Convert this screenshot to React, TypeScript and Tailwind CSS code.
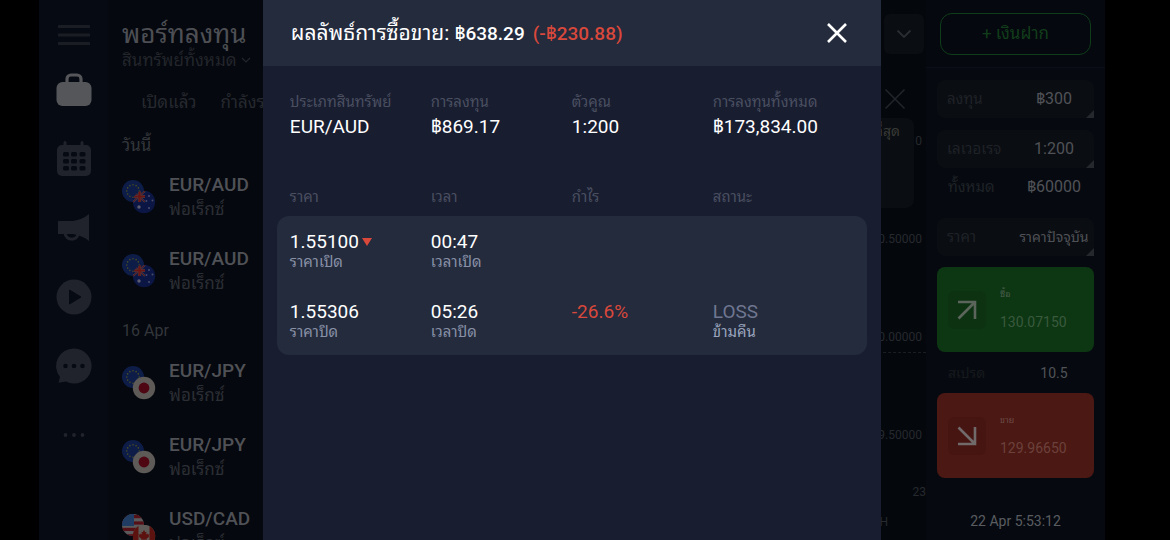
import type { ReactNode } from "react";

type FlagCode = "AU" | "JP" | "CA";

function EuFlag() {
  const stars = Array.from({ length: 12 }, (_, i) => {
    const a = (i * Math.PI) / 6;
    return <circle key={i} cx={11 + 6.2 * Math.sin(a)} cy={11 - 6.2 * Math.cos(a)} r="0.8" fill="#4c4e22" />;
  });
  return (
    <g>
      <circle cx="11" cy="11" r="11" fill="#0d1d48" />
      {stars}
    </g>
  );
}

function UsFlag() {
  return (
    <g clipPath="url(#back)">
      <rect width="22" height="22" fill="#5a5a5c" />
      {[1, 7.4, 13.8, 20.2].map((y) => (
        <rect key={y} y={y} width="22" height="3.2" fill="#551017" />
      ))}
      <rect width="12" height="12" fill="#203c62" />
    </g>
  );
}

function FrontFlag({ code }: { code: FlagCode }) {
  if (code === "JP")
    return (
      <g>
        <circle cx="22" cy="22" r="11.2" fill="#5d5a58" />
        <circle cx="22" cy="22" r="5.4" fill="#4e0612" />
      </g>
    );
  if (code === "CA")
    return (
      <g clipPath="url(#front)">
        <rect x="11" y="11" width="23" height="23" fill="#5d5a58" />
        <rect x="10" y="11" width="6.5" height="23" fill="#5c130f" />
        <rect x="27.5" y="11" width="7" height="23" fill="#5c130f" />
        <path
          d="M22 16l1.3 2.3 1.3-.6-.5 2.8 1.4-1 .4 1 1.6-.2-.9 2 .7.4-2.8 2.1.3 1-2.5-.3V28h-.6v-2.5l-2.5.3.3-1-2.8-2.1.7-.4-.9-2 1.6.2.4-1 1.4 1-.5-2.8 1.3.6z"
          fill="#5c130f"
        />
      </g>
    );
  return (
    <g clipPath="url(#front)">
      <rect x="11" y="11" width="23" height="23" fill="#0b1644" />
      <path d="M11 11l12 11M23 11L11 22" stroke="#3c3c4c" strokeWidth="2.2" />
      <path d="M11 11l12 11M23 11L11 22" stroke="#5e1018" strokeWidth="1" />
      <path d="M17.500 11v11M11 16.500h12" stroke="#45404c" strokeWidth="3.200" />
      <path d="M17.500 11v11M11 16.500h12" stroke="#6a1512" strokeWidth="2.200" />
      <circle cx="17" cy="27" r="1.700" fill="#5c5c70" />
      <circle cx="27" cy="16" r="1" fill="#4a4c6c" />
      <circle cx="24.500" cy="21" r="0.900" fill="#4a4c6c" />
      <circle cx="30.500" cy="20.500" r="1" fill="#4a4c6c" />
      <circle cx="27" cy="28" r="1" fill="#4a4c6c" />
    </g>
  );
}

function PairIcon({ back, front }: { back: "EU" | "US"; front: FlagCode }) {
  return (
    <svg viewBox="0 0 34 34" className="size-[34px] shrink-0" aria-hidden="true">
      <defs>
        <clipPath id="back">
          <circle cx="11" cy="11" r="11" />
        </clipPath>
        <clipPath id="front">
          <circle cx="22" cy="22" r="11.2" />
        </clipPath>
      </defs>
      {back === "EU" ? <EuFlag /> : <UsFlag />}
      <FrontFlag code={front} />
    </svg>
  );
}

function NavButton({ label, children }: { label: string; children: ReactNode }) {
  return (
    <button type="button" aria-label={label} className="flex h-[69px] w-full shrink-0 items-center justify-center">
      {children}
    </button>
  );
}

function Sidebar() {
  return (
    <nav className="flex w-[69px] shrink-0 flex-col bg-[#060a12]">
      <button type="button" aria-label="เมนู" className="flex h-[55px] shrink-0 items-center justify-center pt-[14px]">
        <svg viewBox="0 0 32 22" className="h-[22px] w-8">
          <path d="M1 2.500h30M1 11h30M1 19.500h30" stroke="#1a1d23" strokeWidth="3" strokeLinecap="round" />
        </svg>
      </button>
      <NavButton label="พอร์ทลงทุน">
        <svg viewBox="0 0 36 34" className="h-[34px] w-9">
          <path d="M11 10V6a4 4 0 0 1 4-4h6a4 4 0 0 1 4 4v4" fill="none" stroke="#55565a" strokeWidth="3.200" />
          <rect x="0.500" y="9" width="35" height="24" rx="6" fill="#55565a" />
        </svg>
      </NavButton>
      <NavButton label="ปฏิทิน">
        <svg viewBox="0 0 34 36" className="h-9 w-[34px]">
          <path d="M8 1.500v5M25 1.500v5" stroke="#20232c" strokeWidth="3" strokeLinecap="round" />
          <rect y="4" width="34" height="31" rx="5" fill="#20232c" />
          {[11, 18, 25].map((y) =>
            [6, 14, 22.5].map((x) => (
              <rect key={`${x}-${y}`} x={x} y={y} width="6" height="4.500" rx="1.500" fill="#060a12" />
            )),
          )}
        </svg>
      </NavButton>
      <NavButton label="ข่าวสาร">
        <svg viewBox="0 0 34 28" className="h-7 w-[34px]">
          <path d="M1 7h15c6-1 11-3 16-7v27c-5-4-10-6-16-7H1z" fill="#20232c" />
          <path d="M8 19c1 8 12 8 13 1" fill="none" stroke="#20232c" strokeWidth="3" />
        </svg>
      </NavButton>
      <NavButton label="วิดีโอ">
        <svg viewBox="0 0 36 36" className="size-9">
          <circle cx="18" cy="18" r="17.500" fill="#20232c" />
          <path d="M13.500 11v14l11.500-7z" fill="#060a12" stroke="#060a12" strokeLinejoin="round" />
        </svg>
      </NavButton>
      <NavButton label="แชท">
        <svg viewBox="0 0 36 36" className="size-9">
          <path d="M18 .5a17.500 17.500 0 1 1-8 33L2.500 34.800 4 29A17.500 17.500 0 0 1 18 .5z" fill="#20232c" />
          <circle cx="9.500" cy="18" r="2.300" fill="#060a12" />
          <circle cx="18" cy="18" r="2.300" fill="#060a12" />
          <circle cx="26.500" cy="18" r="2.300" fill="#060a12" />
        </svg>
      </NavButton>
      <NavButton label="เพิ่มเติม">
        <svg viewBox="0 0 22 4" className="h-1 w-[22px]">
          <circle cx="2.500" cy="2" r="1.900" fill="#20232c" />
          <circle cx="11" cy="2" r="1.900" fill="#20232c" />
          <circle cx="19.500" cy="2" r="1.900" fill="#20232c" />
        </svg>
      </NavButton>
    </nav>
  );
}

function Position({ pair, back, front }: { pair: string; back: "EU" | "US"; front: FlagCode }) {
  return (
    <li className="flex h-[74px] gap-[13px] pt-[9px]">
      <div className="pt-[7px]">
        <PairIcon back={back} front={front} />
      </div>
      <div>
        <div className="text-[19px] leading-6 font-medium text-[#4f5156]">{pair}</div>
        <div className="text-[17px] leading-6 text-[#2b2e34]">ฟอเร็กซ์</div>
      </div>
    </li>
  );
}

function Portfolio() {
  return (
    <section className="w-[222px] shrink-0 bg-[#05080e] pl-[14px]">
      <h1 className="pt-[18px] text-[26px] leading-8 text-[#4d4f54]">พอร์ทลงทุน</h1>
      <button type="button" className="flex h-5 items-center gap-1 text-[17px] leading-5 text-[#22252b]">
        สินทรัพย์ทั้งหมด
        <svg viewBox="0 0 10 6" className="h-1.5 w-2.5">
          <path d="M1 1l4 4 4-4" fill="none" stroke="currentColor" strokeWidth="1.200" />
        </svg>
      </button>
      <div className="flex h-14 items-center gap-6 pt-[10px] pl-[19px] text-[17px] whitespace-nowrap text-[#26292f]">
        <button type="button">เปิดแล้ว</button>
        <button type="button">กำลังรอ</button>
      </div>
      <h2 className="h-[38px] text-[17px] leading-[38px] text-[#33363b]">วันนี้</h2>
      <ul>
        <Position pair="EUR/AUD" back="EU" front="AU" />
        <Position pair="EUR/AUD" back="EU" front="AU" />
      </ul>
      <h2 className="h-[38px] text-base leading-[38px] text-[#33363b]">16 Apr</h2>
      <ul>
        <Position pair="EUR/JPY" back="EU" front="JP" />
        <Position pair="EUR/JPY" back="EU" front="JP" />
        <Position pair="USD/CAD" back="US" front="CA" />
      </ul>
    </section>
  );
}

function Chart() {
  return (
    <section className="flex min-w-0 flex-1 flex-col bg-[#04070c]">
      <div className="flex h-[68px] shrink-0 items-center justify-end pr-[2px]">
        <button
          type="button"
          aria-label="เลือกสินทรัพย์"
          className="flex size-10 items-center justify-center rounded-md bg-[#0a0d12]"
        >
          <svg viewBox="0 0 16 10" className="h-2.5 w-4">
            <path d="M1.500 1.500L8 8l6.500-6.500" fill="none" stroke="#2a2d32" strokeWidth="1.800" />
          </svg>
        </button>
      </div>
      <div className="relative flex flex-col pt-6 text-right text-xs text-[#26292e]">
        {["0", "0.50000", "0.00000", "9.50000"].map((p) => (
          <div key={p} className="h-[98px] pr-1 leading-[98px]">
            {p}
          </div>
        ))}
        <div className="absolute top-[284px] right-0 w-full border-t border-dashed border-[#1a1d22]" />
        <div className="absolute top-[50px] right-3 h-[90px] w-40 rounded-lg bg-[#0a0d11] pt-[3px] pr-[14px] text-sm leading-5 text-[#383a36]">
          ที่สุด
        </div>
        <button type="button" aria-label="ปิดกราฟ" className="absolute top-5 right-5">
          <svg viewBox="0 0 22 22" className="size-[22px]">
            <path d="M1.500 1.500l19 19M20.500 1.500l-19 19" stroke="#22252b" strokeWidth="1.500" />
          </svg>
        </button>
      </div>
      <div className="h-4 text-right text-xs leading-4 text-[#26292e]">23</div>
      <div className="pt-[14px] pr-[38px] text-right text-xs leading-4 text-[#26292e]">H</div>
    </section>
  );
}

function Field({ label, value, small }: { label: string; value: string; small?: boolean }) {
  return (
    <button
      type="button"
      className="relative flex h-[38px] w-full shrink-0 items-center justify-between rounded-lg bg-[#0a0d12] pl-[10px]"
    >
      <span className="text-[15px] text-[#1f2227]">{label}</span>
      <span
        className={
          small
            ? "w-20 text-center text-sm whitespace-nowrap text-[#505257]"
            : "w-20 text-center text-base text-[#505257]"
        }
      >
        {value}
      </span>
      <svg viewBox="0 0 8 8" className="absolute right-0 bottom-0 size-2">
        <path d="M8 0v8H0z" fill="#25282c" />
      </svg>
    </button>
  );
}

function InfoRow({ label, value, small }: { label: string; value: string; small?: boolean }) {
  return (
    <div className="flex items-center justify-between pl-[11px]">
      <span className={small ? "text-sm text-[#16191d]" : "text-[15px] text-[#1f2227]"}>{label}</span>
      <span className={small ? "w-20 text-center text-sm text-[#505257]" : "w-20 text-center text-base text-[#505257]"}>
        {value}
      </span>
    </div>
  );
}

function TradePanel() {
  return (
    <aside className="flex w-[179px] shrink-0 flex-col bg-[#060a10]">
      <div className="flex h-[68px] shrink-0 items-center border-b border-[#0b0e1a] bg-[#05080e] px-[14px]">
        <button
          type="button"
          className="h-[42px] w-full rounded-xl border border-[#0f3d1a] text-[17px] text-[#123d1b]"
        >
          + เงินฝาก
        </button>
      </div>
      <div className="flex flex-col px-[11px] pt-3">
        <Field label="ลงทุน" value="฿300" />
        <div className="pt-3">
          <Field label="เลเวอเรจ" value="1:200" />
        </div>
        <div className="grid h-[38px] items-center">
          <InfoRow label="ทั้งหมด" value="฿60000" />
        </div>
        <div className="pt-3">
          <Field label="ราคา" value="ราคาปัจจุบัน" small />
        </div>
        <button
          type="button"
          className="mt-[11px] flex h-[85px] items-center gap-[14px] rounded-lg bg-[#0d3613] pl-[11px] text-left"
        >
          <span className="flex size-[38px] items-center justify-center rounded-md bg-[#0c3212]">
            <svg viewBox="0 0 20 20" className="size-5">
              <path d="M1 2h17v17M18 2L1.500 18.500" fill="none" stroke="#5c655c" strokeWidth="2.600" />
            </svg>
          </span>
          <span className="flex flex-col gap-3">
            <span className="text-[9px] leading-3 text-[#4b5e4d]">ซื้อ</span>
            <span className="text-sm leading-5 text-[#395a3d]">130.07150</span>
          </span>
        </button>
        <div className="grid h-[41px] items-center">
          <InfoRow label="สเปรด" value="10.5" small />
        </div>
        <button
          type="button"
          className="flex h-[85px] items-center gap-[14px] rounded-lg bg-[#4b1813] pl-[11px] text-left"
        >
          <span className="flex size-[38px] items-center justify-center rounded-md bg-[#461512]">
            <svg viewBox="0 0 20 20" className="size-5">
              <path d="M1 18h17V1M18 18L1.500 1.500" fill="none" stroke="#706a6a" strokeWidth="2.600" />
            </svg>
          </span>
          <span className="flex flex-col gap-3">
            <span className="text-[9px] leading-3 text-[#6b4b48]">ขาย</span>
            <span className="text-sm leading-5 text-[#6b413c]">129.96650</span>
          </span>
        </button>
        <time className="pt-[33px] text-center text-sm leading-5 text-[#5a5c60]">22 Apr 5:53:12</time>
      </div>
    </aside>
  );
}

const summary = [
  ["ประเภทสินทรัพย์", "EUR/AUD"],
  ["การลงทุน", "฿869.17"],
  ["ตัวคูณ", "1:200"],
  ["การลงทุนทั้งหมด", "฿173,834.00"],
];

function ResultDialog() {
  return (
    <div role="dialog" aria-labelledby="result-title" className="flex w-[58%] flex-col bg-[#181d30]">
      <header className="flex h-[66px] shrink-0 items-center justify-between bg-[#232b3d] pr-[33px] pl-7">
        <h2 id="result-title" className="text-[21px] leading-6 whitespace-nowrap text-white">
          ผลลัพธ์การซื้อขาย: <span className="text-[19px] font-medium">฿638.29</span>
          <span className="pl-2 text-[19px] font-medium text-[#d9483b]">(-฿230.88)</span>
        </h2>
        <button type="button" aria-label="ปิด">
          <svg viewBox="0 0 22 22" className="size-[22px]">
            <path d="M2 2l18 18M20 2L2 20" stroke="#fff" strokeWidth="2.600" />
          </svg>
        </button>
      </header>
      <div className="px-[14px] pt-[26px]">
        <dl className="grid grid-cols-[141px_141px_141px_1fr] pl-[13px]">
          {summary.map(([label, value]) => (
            <div key={label}>
              <dt className="text-[15px] leading-5 text-[#4a4f60]">{label}</dt>
              <dd className="pt-[3px] text-[19px] leading-6 text-white">{value}</dd>
            </div>
          ))}
        </dl>
        <table className="mt-12 w-full table-fixed text-left">
          <thead>
            <tr className="text-[15px] leading-5 text-[#4a4f60]">
              <th className="w-[141px] pb-[9px] pl-[13px] font-normal">ราคา</th>
              <th className="w-[141px] pb-[9px] pl-[13px] font-normal">เวลา</th>
              <th className="w-[141px] pb-[9px] pl-[13px] font-normal">กำไร</th>
              <th className="pb-[9px] pl-[13px] font-normal">สถานะ</th>
            </tr>
          </thead>
          <tbody className="text-[19px] leading-6 text-white">
            <tr className="align-top">
              <td className="rounded-tl-xl bg-[#232b3d] pt-[14px] pb-4 pl-[13px]">
                <div className="flex items-center gap-[3px]">
                  1.55100
                  <svg viewBox="0 0 10 8" className="h-2 w-2.5">
                    <path d="M0 0h10L5 8z" fill="#d9483b" />
                  </svg>
                </div>
                <div className="text-[15px] leading-4 text-[#8890a6]">ราคาเปิด</div>
              </td>
              <td className="bg-[#232b3d] pt-[14px] pb-4 pl-[13px]">
                <div>00:47</div>
                <div className="text-[15px] leading-4 text-[#8890a6]">เวลาเปิด</div>
              </td>
              <td className="bg-[#232b3d]" />
              <td className="rounded-tr-xl bg-[#232b3d]" />
            </tr>
            <tr className="align-top">
              <td className="rounded-bl-xl bg-[#232b3d] pt-[14px] pb-[15px] pl-[13px]">
                <div>1.55306</div>
                <div className="text-[15px] leading-4 text-[#8890a6]">ราคาปิด</div>
              </td>
              <td className="bg-[#232b3d] pt-[14px] pb-[15px] pl-[13px]">
                <div>05:26</div>
                <div className="text-[15px] leading-4 text-[#8890a6]">เวลาปิด</div>
              </td>
              <td className="bg-[#232b3d] pt-[14px] pb-[15px] pl-[13px] text-[#d9483b]">-26.6%</td>
              <td className="rounded-br-xl bg-[#232b3d] pt-[14px] pb-[15px] pl-[13px]">
                <div className="text-[#6f7690]">LOSS</div>
                <div className="text-[15px] leading-4 text-[#9aa4bc]">ข้ามคืน</div>
              </td>
            </tr>
          </tbody>
        </table>
      </div>
    </div>
  );
}

export default function App() {
  return (
    <div className="h-screen overflow-hidden bg-black pr-[65px] pl-[39px] font-['Roboto','Noto_Sans_Thai_Looped','Droid_Sans_Thai','Loma','Waree','Noto_Sans',sans-serif]">
      <div className="relative flex h-full overflow-hidden">
        <Sidebar />
        <Portfolio />
        <Chart />
        <TradePanel />
        <div className="absolute inset-0 flex justify-center">
          <ResultDialog />
        </div>
      </div>
    </div>
  );
}
